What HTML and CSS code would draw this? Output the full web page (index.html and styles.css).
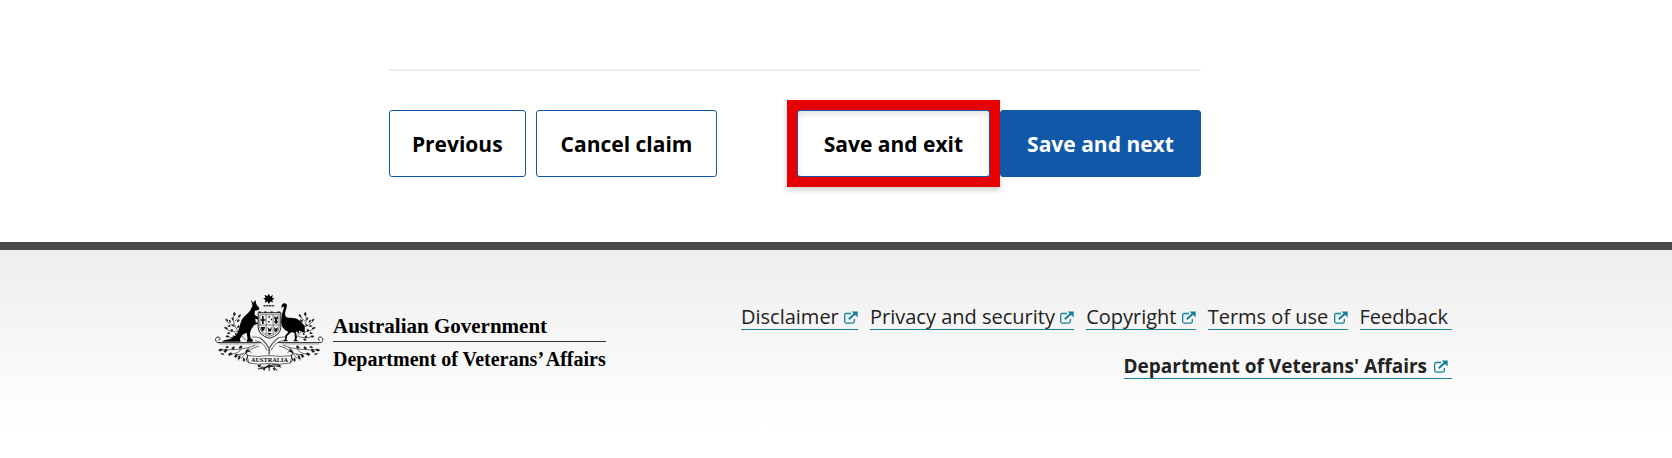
FILE: index.html
```html
<!DOCTYPE html>
<html lang="en">
<head>
  <meta charset="UTF-8" />
  <meta name="viewport" content="width=device-width, initial-scale=1" />
  <title>Department of Veterans' Affairs</title>
  <link rel="stylesheet" href="styles.css">
</head>
<body>

  <!-- shared icon shapes -->
  <svg class="sprite" aria-hidden="true">
    <symbol id="external" viewBox="0 0 14 13">
      <path d="M7 2.500H2.200Q.7 2.500 .7 4v6.600q0 1.500 1.500 1.500h6.600q1.500 0 1.500-1.500V8" fill="none" stroke="currentColor" stroke-width="1.300" />
      <path d="M4.800 8.200 11 2.400" fill="none" stroke="currentColor" stroke-width="2" />
      <path d="M7.600.5H13.700V6.400z" fill="currentColor" />
    </symbol>
    <symbol id="sprig" viewBox="0 0 70 92">
      <path d="M68 88C54 74 44 62 36 46S30 18 34 6M36 48C26 44 16 38 8 28M44 62C30 64 18 60 6 52M54 76C40 82 24 82 12 76M34 30C42 26 46 20 48 12" fill="none" stroke="#222" stroke-width="2" />
      <g fill="#222">
        <path d="M34 2l4 8-5 5-4-7zM27 18l4 7-2 4-5-7zM45 15l6-7 2 6-6 6zM40 29l8-5 1 6-7 4zM6 22l8 4v6l-7-4zM18 34l-2-8 5 2 3 7zM12 44l7-2 4 4-7 2zM2 48l9 1 3 5-8 0zM21 60l4-7 5 3-4 6zM10 67l7-4 5 4-6 3zM6 75l8-2 4 4-7 3zM27 80l3-7 5 3-2 6zM28 87l8-5 4 4-5 3zM41 49l5-8 3 6-5 5zM51 65l3-8 4 4-2 7z" />
        <circle cx="29" cy="43" r="3" /><circle cx="38" cy="69" r="3" />
      </g>
    </symbol>
  </svg>

  <main class="page">
    <form class="claim-form">
      <hr class="divider">
      <div class="actions">
        <div class="actions-left">
          <button type="button" class="btn">Previous</button>
          <button type="button" class="btn btn-cancel">Cancel claim</button>
        </div>
        <div class="actions-right">
          <div class="highlight">
            <button type="button" class="btn btn-exit">Save and exit</button>
          </div>
          <button type="submit" class="btn btn-primary">Save and next</button>
        </div>
      </div>
    </form>
  </main>

  <footer class="footer">
    <div class="footer-inner">
      <div class="brand">
        <svg class="crest" viewBox="29 22 328 238" role="img" aria-label="Australian coat of arms">
          <!-- wattle behind the shield -->
          <use href="#sprig" x="54" y="75" width="70" height="92" />
          <use href="#sprig" x="0" y="0" width="70" height="92" transform="translate(334 75) scale(-1 1)" />
          <g fill="none" stroke="#222" stroke-width="2">
            <path d="M40 170C28 170 28 153 38 153c8 0 8 10 1 10M38 170H168M344 170c12 0 12-17 2-17-8 0-8 10-1 10M346 170H218" stroke-width="3" />
            <path d="M42 174H158M230 174H342" stroke="#777" />
            <path d="M140 154C158 150 174 158 184 174c6 8 8 16 8 32M244 154c-18-4-34 4-44 20-6 8-8 16-8 32M150 164c14 2 28 10 36 30M234 164c-14 2-28 10-36 30M164 154l28 32 28-32" />
            <path d="M150 178C120 190 80 194 42 190M132 186c-8 14-18 20-36 20M108 190c-10 12-22 16-38 12M162 180c-26 8-40 18-54 38M112 204c-10 4-16 12-12 20" />
            <path d="M234 178c30 12 70 16 108 12M252 186c8 14 18 20 36 20M276 190c10 12 22 16 38 12M222 180c26 8 40 18 54 38M272 204c10 4 16 12 12 20" />
            <path d="M158 241c22 10 50-8 70 3M158 249c26 0 42-18 62-13M174 252c10-14 28-20 42 3M192 228v27" stroke-width="3" />
          </g>
          <g fill="#222">
            <path d="M38 192l10-4 5 5-9 4zM54 196l8-8 5 5-7 8zM68 206l9-7 5 5-9 6zM78 187l8-7 3 7-7 5zM86 212l7-9 5 5-6 8zM98 218l3-10 6 5-5 8zM112 224l2-9 6 4-3 9zM100 184l8-6 4 6-8 5zM120 196l8-8 3 7-8 6zM46 201l8 1 3 5-9-1zM60 184l7-5 4 5-7 3z" />
            <path d="M346 192l-10-4-5 5 9 4zM330 196l-8-8-5 5 7 8zM316 206l-9-7-5 5 9 6zM306 187l-8-7-3 7 7 5zM298 212l-7-9-5 5 6 8zM286 218l-3-10-6 5 5 8zM272 224l-2-9-6 4 3 9zM284 184l-8-6-4 6 8 5zM264 196l-8-8-3 7 8 6zM338 201l-8 1-3 5 9-1zM324 184l-7-5-4 5 7 3z" />
            <path d="M156 238l12-3-3 9zM228 238l-12-3 3 9zM172 248l10-2-5 9zM212 248l-10-2 5 9zM184 238h16l-8 10z" />
          </g>

          <!-- star and wreath -->
          <path fill="#000" d="M191 23l4 8 8-4-2 8 7 3-7 4 3 7-8-3-5 8-4-8-8 4 2-8-7-4 7-3-3-8 9 3z" />
          <path d="M175 59h33" fill="none" stroke="#222" stroke-width="4" stroke-dasharray="6 2" />

          <!-- shield -->
          <path d="M159 80H227V124Q226 148 193 157 160 148 159 124z" fill="#f4f4f4" stroke="#222" stroke-width="3" />
          <path d="M164 86H222V124Q220 143 193 151 166 143 164 124zM164 117H222M183 86V146M204 86V146" fill="none" stroke="#444" stroke-width="2" />
          <path d="M166 102h15M173 90v24" stroke="#111" stroke-width="5" />
          <g fill="#111">
            <path d="M190 90h4v5h-4zM197 98h4v5h-4zM189 105h4v5h-4zM208 90l5 4 5-4 1 7-4 4 4 8-6 5-6-5 3-8-3-4zM167 123h13l-3 10-7 4zM187 123l7 7 6-8-2 13-8 3zM207 123l5 5 7-5-3 13-8 2zM186 141h14l-7 7z" />
            <path d="M160 76h8v4h-8zM177 76h8v4h-8zM195 76h8v4h-8zM217 76h8v4h-8z" />
          </g>

          <!-- kangaroo -->
          <path fill="#000" d="M137 41L144 50 151 42 153 54 163 67 160 72 149 74 148 86 160 94 158 100 150 98 152 110 158 108 157 114 147 117 138 130 134 142 136 156 143 162V167H124L127 158 124 140 112 146 104 158 106 167H50L56 163C78 160 92 152 98 138 102 128 104 112 110 100 118 88 130 82 136 72L142 58z" />
          <!-- emu -->
          <path fill="#000" d="M226 66L236 61C238 64 233 76 230 86L228 106C228 122 236 132 250 138L241 148 240 160 232 166H250L244 162 246 150 258 139 268 140 270 160 265 166H282L274 162C276 156 276 148 272 138L284 134 299 141C298 134 301 128 298 120 290 104 274 94 254 95 244 96 240 92 240 82 241 72 248 62 244 54 238 48 228 54 230 61z" />

          <!-- ribbon -->
          <path d="M126 209q28 5 66 0 38 5 68 0l-4 22q-30 7-64 2-34 5-62-2z" fill="#f7f7f7" stroke="#222" stroke-width="2" />
          <path d="M138 200a8 6 0 1 0-10 8l-5 15 9 8M248 200a8 6 0 1 1 10 8l5 15-9 8" fill="none" stroke="#222" stroke-width="3" />
          <text class="crest-text" x="193" y="229" text-anchor="middle">AUSTRALIA</text>
        </svg>
        <div class="brand-text">
          <span class="brand-gov">Australian Government</span>
          <span class="brand-dept">Department of Veterans’&hairsp;Affairs</span>
        </div>
      </div>

      <nav class="footer-nav" aria-label="Footer">
        <ul class="links">
          <li><a href="#">Disclaimer <svg class="ext"><use href="#external" /></svg></a></li>
          <li><a href="#">Privacy and security <svg class="ext"><use href="#external" /></svg></a></li>
          <li><a href="#">Copyright <svg class="ext"><use href="#external" /></svg></a></li>
          <li><a href="#">Terms of use <svg class="ext"><use href="#external" /></svg></a></li>
          <li><a class="plain" href="#">Feedback</a></li>
        </ul>
        <a class="dept-link" href="#">Department of Veterans' Affairs <svg class="ext"><use href="#external" /></svg></a>
      </nav>
    </div>
  </footer>

</body>
</html>
```
FILE: styles.css
```css
* {
  box-sizing: border-box;
}
body {
  margin: 0;
  background: #fff;
  color: #222;
  font-family: "Open Sans", "Noto Sans", sans-serif;
}
.sprite {
  display: none;
}
.page,
.footer-inner {
  max-width: 1242px;
  margin: 0 auto;
}
.page {
  padding: 69px 0 55px;
}
.claim-form {
  max-width: 812px;
  margin-left: 14%;
}
.divider {
  height: 2px;
  margin: 0 0 29px;
  border: none;
  background: #eee;
}
.actions,
.actions-left,
.actions-right {
  display: flex;
  align-items: center;
}
.actions {
  justify-content: space-between;
}
.actions-left {
  gap: 10px;
}
.btn {
  padding: 19px 22px 17px;
  border: 1px solid #1258a8;
  border-radius: 3px;
  background: #fff;
  color: #000;
  font-family: "Open Sans", sans-serif;
  font-size: 21px;
  font-weight: bold;
  line-height: 29px;
  white-space: nowrap;
  cursor: pointer;
}
.btn-cancel {
  padding-left: 24px;
  padding-right: 24px;
}
.btn-exit,
.btn-primary {
  padding-left: 26px;
  padding-right: 26px;
}
.btn-exit {
  display: block;
  box-shadow: inset 0 3px 6px rgba(0, 0, 0, 0.12);
}
.btn-primary {
  background: #1258a8;
  color: #fff;
}
.highlight {
  border: 10px solid #e60000;
  background: #e60000;
  box-shadow: 0 3px 6px rgba(0, 0, 0, 0.2);
}
.footer {
  min-height: 216px;
  border-top: 8px solid #4a4a4a;
  background: linear-gradient(#eee, #fff 180px);
}
.footer-inner {
  display: flex;
  justify-content: space-between;
  padding: 43px 5px 0 0;
}
.brand {
  display: flex;
  align-items: flex-start;
  gap: 9px;
}
.crest {
  width: 109px;
  height: 80px;
}
.crest-text {
  font-family: "Liberation Serif", serif;
  font-size: 19px;
  font-weight: bold;
}
.brand-text {
  display: flex;
  flex-direction: column;
  margin-top: 18px;
  color: #000;
  font-family: "Liberation Serif", serif;
  font-size: 21px;
  font-weight: bold;
  line-height: 30px;
  white-space: nowrap;
}
.brand-gov {
  border-bottom: 1px solid #333;
}
.brand-dept {
  font-size: 20px;
  line-height: 34px;
}
.footer-nav {
  display: flex;
  flex-direction: column;
  align-items: flex-end;
  gap: 24px;
  padding-top: 12px;
  font-size: 20px;
}
.links {
  display: flex;
  gap: 12px;
  margin: 0;
  padding: 0;
  list-style: none;
}
.footer-nav a {
  display: block;
  border-bottom: 1px solid #17849a;
  color: #222;
  line-height: 24px;
  text-decoration: none;
  white-space: nowrap;
}
.footer-nav .plain {
  padding-right: 4px;
}
.footer-nav .dept-link {
  padding-right: 4px;
  font-size: 19px;
  font-weight: bold;
}
.ext {
  width: 14px;
  height: 13px;
  color: #13819a;
}
.dept-link .ext {
  margin-left: 2px;
}
```
